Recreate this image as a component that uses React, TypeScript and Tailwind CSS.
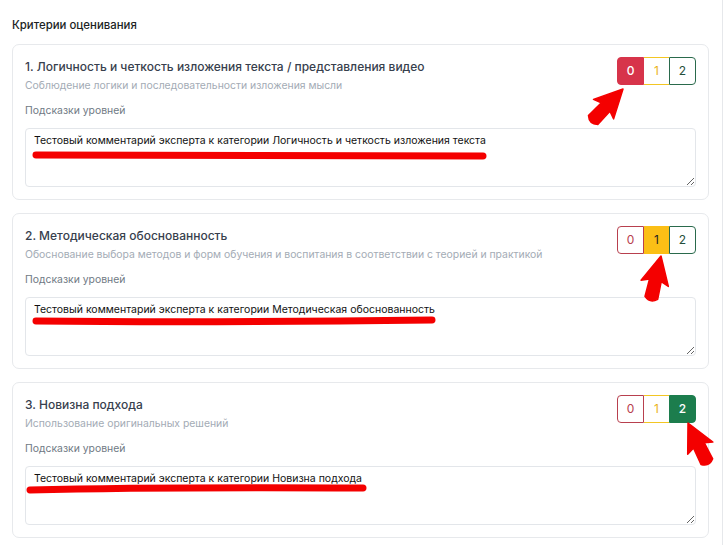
import React from "react";

type Level = 0 | 1 | 2;

const criteria: { title: string; hint: string; comment: string; score: Level }[] = [
    {
        title: "1. Логичность и четкость изложения текста / представления видео",
        hint: "Соблюдение логики и последовательности изложения мысли",
        comment: "Тестовый комментарий эксперта к категории Логичность и четкость изложения текста",
        score: 0,
    },
    {
        title: "2. Методическая обоснованность",
        hint: "Обоснование выбора методов и форм обучения и воспитания в соответствии с теорией и практикой",
        comment: "Тестовый комментарий эксперта к категории Методическая обоснованность",
        score: 1,
    },
    {
        title: "3. Новизна подхода",
        hint: "Использование оригинальных решений",
        comment: "Тестовый комментарий эксперта к категории Новизна подхода",
        score: 2,
    },
];

const ScoreButtons = ({ score }: { score: Level }) => {
    return <div className="flex h-[28px] shrink-0">
        <button
            className={`w-[27px] h-full rounded-l-[4px] border text-[12px] ${score === 0
                ? "bg-[#d7344a] border-[#d7344a] text-white font-medium"
                : "bg-white border-[#b8404e] text-[#b8404e]"
                }`}
        >
            0
        </button>
        <button
            className={`w-[25px] h-full border-y text-[12px] ${score === 1
                ? "bg-[#fbbf16] border-[#fbbf16] text-[#222]"
                : "bg-white border-[#f3c623] text-[#eab316]"
                }`}
        >
            1
        </button>
        <button
            className={`w-[27px] h-full rounded-r-[4px] border text-[12px] ${score === 2
                ? "bg-[#1c7d4d] border-[#1c7d4d] text-white font-medium"
                : "bg-white border-[#2a6a4c] text-[#244f3b]"
                }`}
        >
            2
        </button>
    </div>
}

// red marker annotations drawn over the screenshot
const Arrow = ({ x, y, angle }: { x: number; y: number; angle: number }) => (
    <g transform={`translate(${x} ${y}) rotate(${angle})`}>
        <path
            d="M0 0 L14 28 L6 25 L6.5 43 Q0 49 -6.5 43 L-6 25 L-14 28 Z"
            fill="#f40000"
            stroke="#f40000"
            strokeWidth="1.5"
            strokeLinejoin="round"
        />
    </g>
);

const Annotations = () => (
    <svg className="absolute inset-0 pointer-events-none" width="726" height="545" viewBox="0 0 726 545">
        <g stroke="#f40000" strokeWidth="7" strokeLinecap="round" fill="none">
            <path d="M36 155 L483 156" />
            <path d="M36 321 Q200 323 432 320" />
            <path d="M30 490 Q150 487 363 488" />
        </g>
        <Arrow x={623} y={89} angle={44} />
        <Arrow x={661} y={256} angle={13} />
        <Arrow x={688} y={423} angle={-26} />
    </svg>
);

export default function App() {
    return <div className="relative w-[726px] h-[545px] overflow-hidden bg-white font-['Inter',sans-serif]">
        <div className="w-[723px] h-full border-r border-[#e6e8eb] pl-3 pr-[13px] pt-[16px]">
            <h2 className="text-[11.4px] leading-[18px] font-medium text-[#1c1f24] mb-[10px]">Критерии оценивания</h2>
            <div className="flex flex-col gap-[13px]">
                {criteria.map((c) => (
                    <div key={c.title} className="border border-[#e7e9ec] rounded-[7px] px-3 pt-[12px] pb-[12px]">
                        <div className="flex justify-between items-start">
                            <div>
                                <div className="text-[12px] leading-[20px] font-medium text-[#37404d]">{c.title}</div>
                                <div className="text-[10.4px] leading-[16px] text-[#a3abb5] mt-[1px]">{c.hint}</div>
                            </div>
                            <ScoreButtons score={c.score} />
                        </div>
                        <div className="text-[10.4px] leading-[16px] text-[#6f7984] mt-[9px] mb-[9px]">Подсказки уровней</div>
                        <textarea
                            readOnly
                            defaultValue={c.comment}
                            className="block w-full h-[59px] border border-[#e3e6ea] rounded-[4px] px-2 py-[3px] text-[10.5px] leading-[18px] text-[#111] outline-none"
                        />
                    </div>
                ))}
            </div>
        </div>
        <Annotations />
    </div>
}
